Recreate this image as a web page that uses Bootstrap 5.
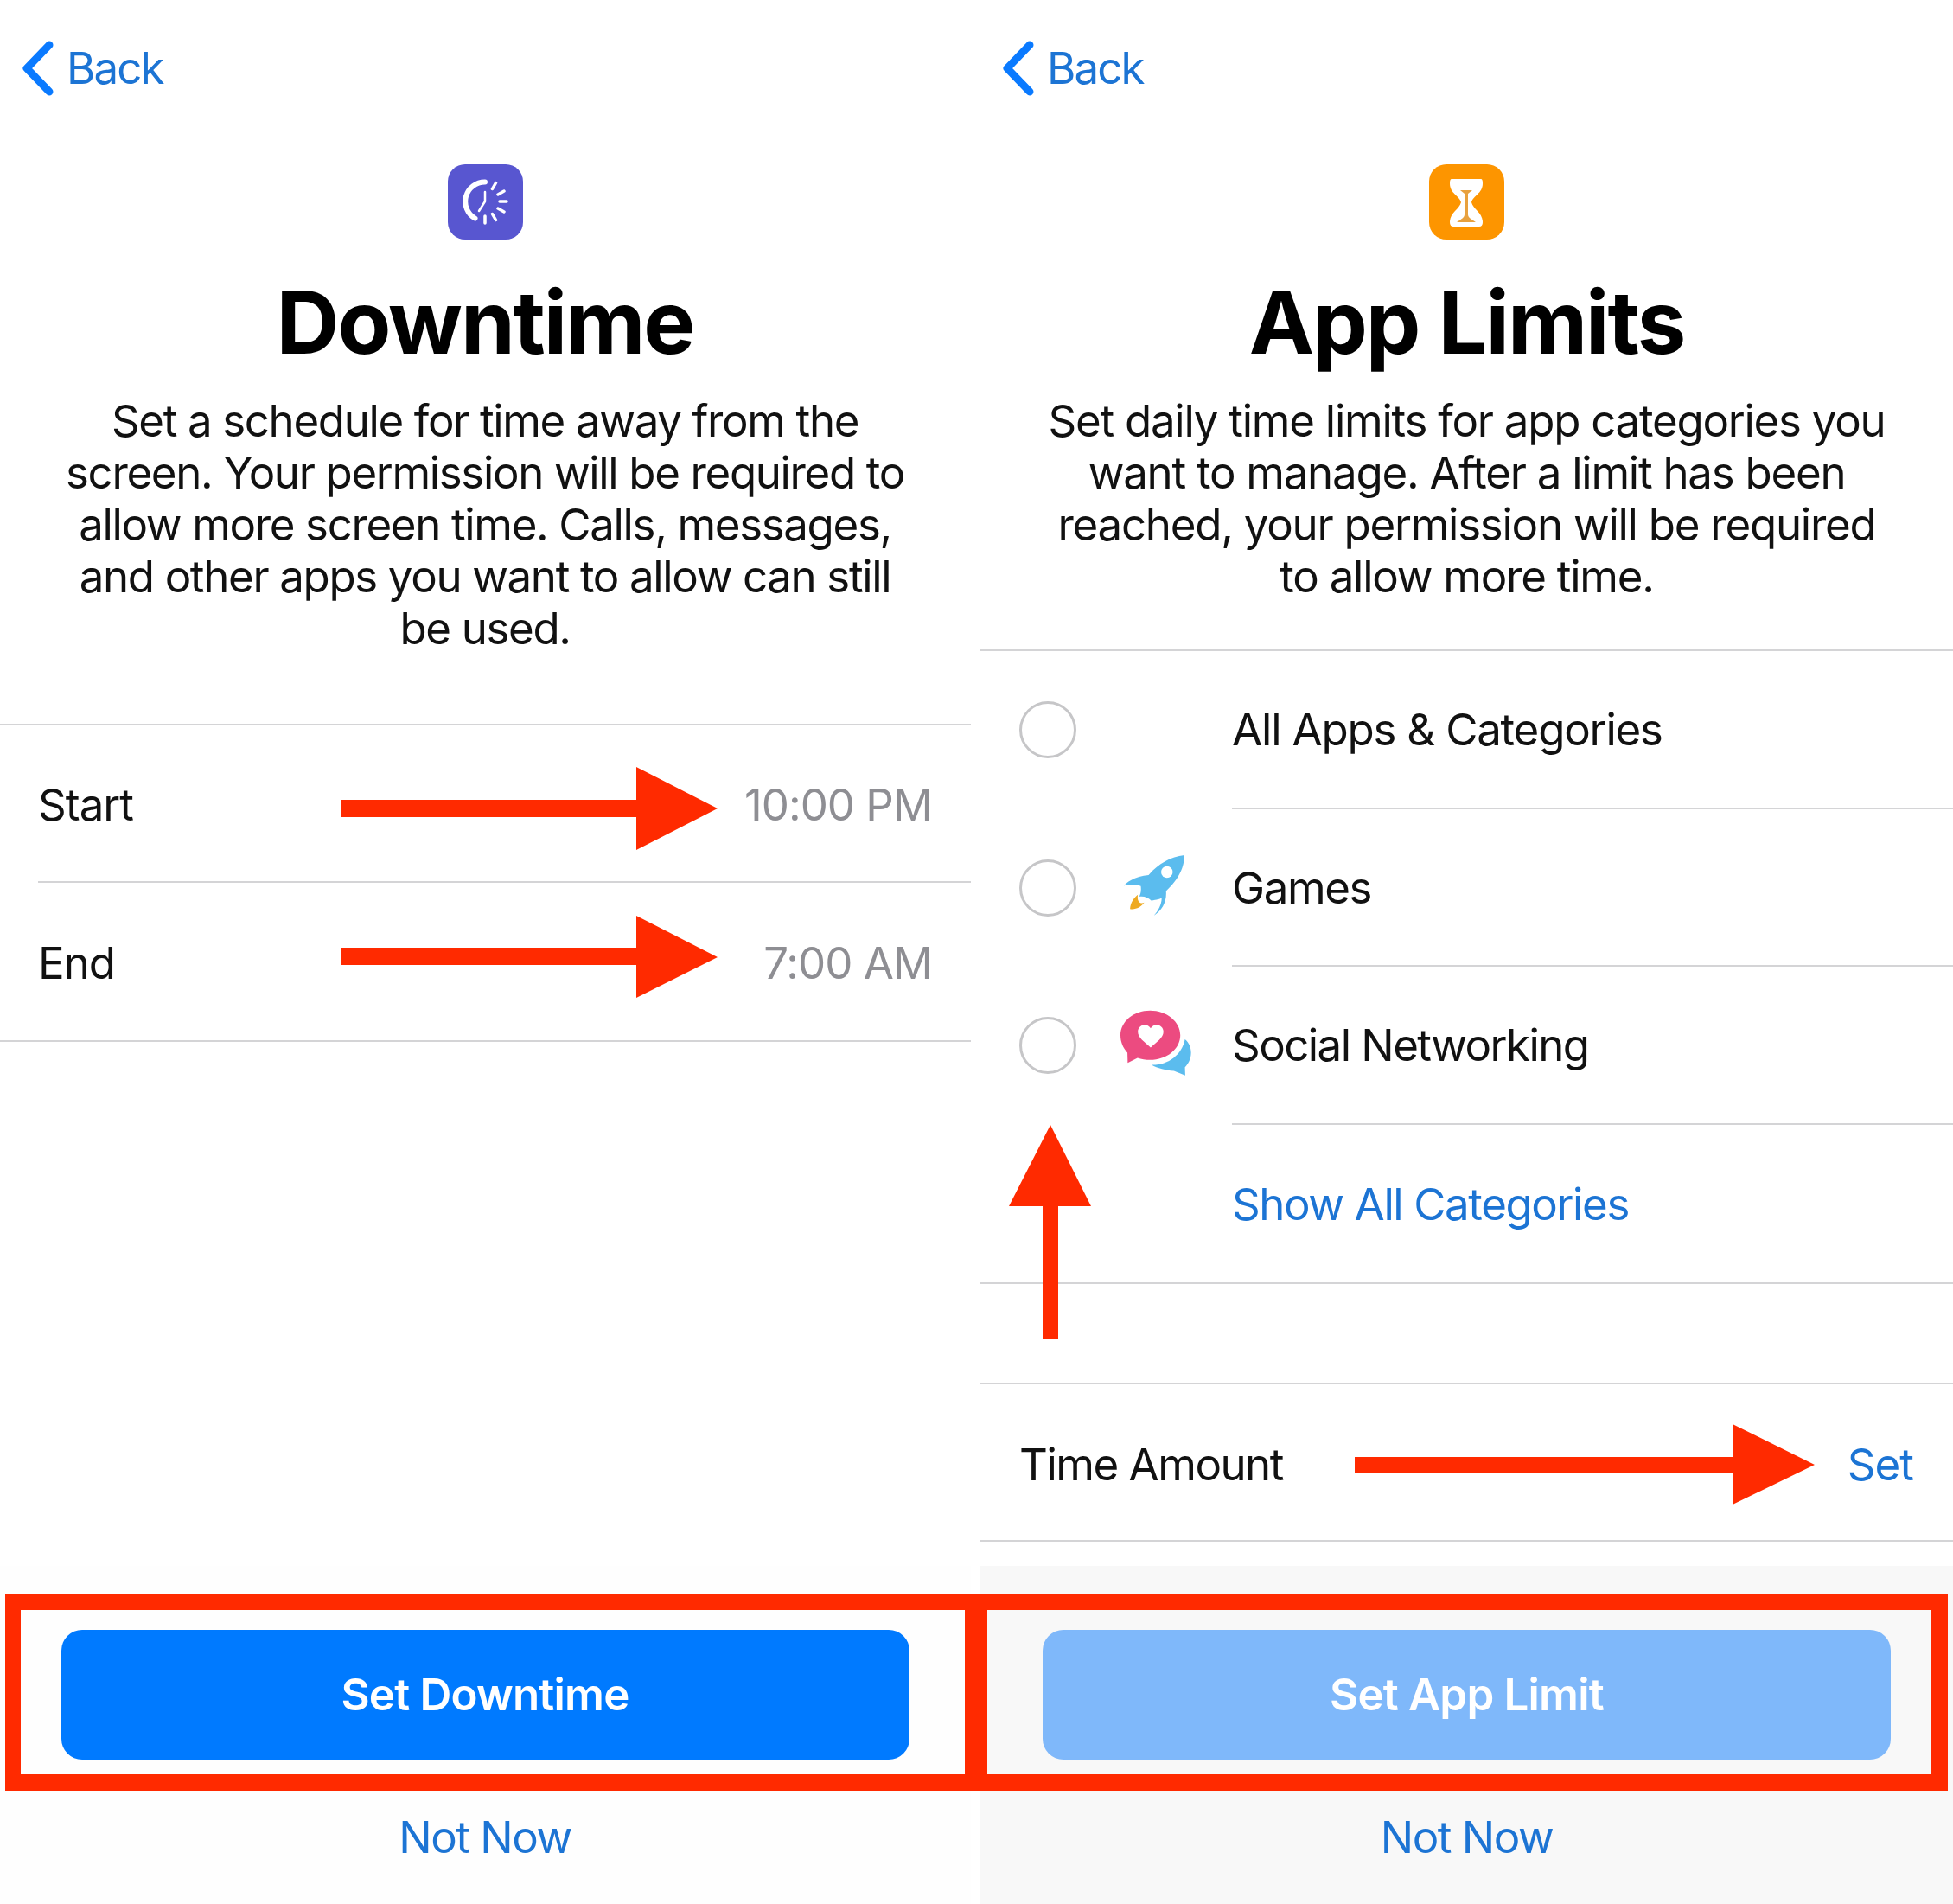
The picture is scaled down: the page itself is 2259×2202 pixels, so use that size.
<!DOCTYPE html>
<html lang="en">
<head>
<meta charset="UTF-8">
<title>Screen Time Setup</title>
<link href="https://cdn.jsdelivr.net/npm/bootstrap@5.3.3/dist/css/bootstrap.min.css" rel="stylesheet"/>
<style>
  html, body { margin: 0; background: #fff; }
  body { width: 2259px; height: 2202px; position: relative; overflow: hidden; font-family: Inter, "Liberation Sans", sans-serif; font-size: 51px; color: #111; }
  .screens { width: 2259px; height: 2202px; }
  .phone { width: 1124px; height: 2202px; margin-left: -1px; }
  .phone-right { width: 1125px; margin-left: 11px; }
  .back-bar { height: 158px; padding-left: 25px; color: #1c74d4; }
  .phone:first-child .back-bar { padding-left: 26px; }
  .back-bar span { margin-left: 14px; letter-spacing: -1.9px; }
  .app-tile { width: 87px; height: 87px; margin: 32px auto 0; display: block; }
  .screen-title { font-size: 101px; font-weight: 700; line-height: 120px; margin: 35px 0 0; letter-spacing: -2px; color: #000; font-family: Inter, sans-serif; }
  .intro { line-height: 60px; margin: 25px 0 0; letter-spacing: -1.35px; }
  .intro-long { margin-bottom: 80px; }
  .intro-short { margin-bottom: 54px; letter-spacing: -1.25px; }
  .sep-top { border-top: 2px solid #d4d4d6; }
  .sep-bottom { border-bottom: 2px solid #d4d4d6; }
  .line-row { height: 182px; padding-top: 4px; letter-spacing: -1px; }
  .time-row { height: 184px; padding-top: 6px; }
  .inset-a { padding-left: 45px; }
  .inset-end { padding-right: 46px; }
  .inset-end-l { padding-right: 45px; }
  .tight-label { letter-spacing: -1.5px; }
  .muted-val { color: #8e8e93; }
  .blue-link { color: #1c74d4; text-decoration: none; }
  .radio-ring { width: 66px; height: 66px; border: 3px solid #c6c6c8; border-radius: 50%; margin-left: 45px; flex: none; }
  .cat-icon { width: 90px; margin: 0 45px; flex: none; display: flex; justify-content: center; }
  .cat-text { flex: 1; height: 100%; display: flex; align-items: center; padding-top: 2px; letter-spacing: -1.4px; }
  .cat-text-wide { letter-spacing: -1.2px; }
  .cat-text-narrow { letter-spacing: -1.55px; }
  .cat-line { border-bottom: 2px solid #d4d4d6; }
  .cat-row { height: 182.6px; }
  .rocket-pic { margin: 0 0 10px 6px; }
  .bubble-pic { margin: 0 0 6px 4px; }
  .time-gap { height: 116px; }
  .bottom-zone { height: 391px; margin-top: auto; background: #fefefe; }
  .bottom-grey { background: #f8f8f8; }
  .big-btn { width: 981px; height: 150px; margin: 74px auto 0; display: block; border: 0; border-radius: 24px; background: #007aff; color: #fff; font-size: 51px; font-weight: 600; letter-spacing: -0.8px; }
  .big-btn-off { background: #7fb8fa; }
  .not-now { display: block; margin-top: 60px; line-height: 60px; letter-spacing: -1.5px; }
  .marks { position: absolute; left: 0; top: 0; pointer-events: none; }
</style>
</head>
<body>
<div class="screens d-flex">

  <div class="phone d-flex flex-column text-center">
    <div class="back-bar d-flex align-items-center text-start">
      <svg width="38" height="64" viewBox="0 0 38 64"><path d="M32 5 L6 32 L32 59" fill="none" stroke="#0a7aff" stroke-width="9" stroke-linecap="round" stroke-linejoin="round"/></svg>
      <span>Back</span>
    </div>
    <svg class="app-tile" viewBox="0 0 87 87">
      <rect width="87" height="87" rx="20" fill="#5856d0"/>
      <path d="M43 20.5 A22.5 22.5 0 0 0 31.5 62.5" fill="none" stroke="#fff" stroke-width="6" stroke-linecap="round"/>
      <path d="M43 32 V43 L36 54" fill="none" stroke="#fff" stroke-width="2.5" stroke-linecap="round" stroke-linejoin="round"/>
      <path d="M51.5 28.5 L55.5 21.5 M58 35 L65 31 M60 43 L68 43 M58 51 L65 55 M51.5 57.5 L55.5 64.5 M43 60 L43 68" stroke="#fff" stroke-width="3.5" stroke-linecap="round"/>
    </svg>
    <h1 class="screen-title">Downtime</h1>
    <p class="intro intro-long">Set a schedule for time away from the<br>screen. Your permission will be required to<br>allow more screen time. Calls, messages,<br>and other apps you want to allow can still<br>be used.</p>
    <div class="sep-top inset-a">
      <div class="line-row d-flex justify-content-between align-items-center inset-end-l sep-bottom"><span>Start</span><span class="muted-val">10:00 PM</span></div>
      <div class="line-row d-flex justify-content-between align-items-center inset-end-l"><span>End</span><span class="muted-val">7:00 AM</span></div>
    </div>
    <div class="sep-top"></div>
    <div class="bottom-zone">
      <button type="button" class="btn big-btn">Set Downtime</button>
      <a href="#" class="not-now blue-link">Not Now</a>
    </div>
  </div>

  <div class="phone phone-right d-flex flex-column text-center">
    <div class="back-bar d-flex align-items-center text-start">
      <svg width="38" height="64" viewBox="0 0 38 64"><path d="M32 5 L6 32 L32 59" fill="none" stroke="#0a7aff" stroke-width="9" stroke-linecap="round" stroke-linejoin="round"/></svg>
      <span>Back</span>
    </div>
    <svg class="app-tile" viewBox="0 0 87 87">
      <rect width="87" height="87" rx="20" fill="#fd9500"/>
      <path d="M26 17 H60 Q62 17 62 22 C62 34 51 36 49 44 C51 52 62 56 62 67 Q62 72 58 72 H28 Q24 72 24 67 C24 56 35 52 37 44 C35 36 24 34 24 22 Q24 17 26 17 Z" fill="#fff"/>
      <path d="M36 30 H50 L45 34 V58 C45 62 50 64 54 67 H32 C36 64 41 62 41 58 V34 Z" fill="#e8a13e"/>
    </svg>
    <h1 class="screen-title">App Limits</h1>
    <p class="intro intro-short">Set daily time limits for app categories you<br>want to manage. After a limit has been<br>reached, your permission will be required<br>to allow more time.</p>
    <div class="sep-top text-start">
      <div class="cat-row d-flex align-items-center">
        <div class="radio-ring"></div><div class="cat-icon"></div>
        <div class="cat-text cat-text-wide cat-line">All Apps &amp; Categories</div>
      </div>
      <div class="cat-row d-flex align-items-center">
        <div class="radio-ring"></div>
        <div class="cat-icon">
          <svg class="rocket-pic" width="84" height="74" viewBox="440 80 250 220">
            <path d="M660 92 C612 98 572 120 537 160 C503 163 472 175 452 197 C475 191 495 192 510 198 C512 215 510 225 504 235 C520 232 535 238 546 248 C565 245 578 242 582 238 C582 262 570 282 555 300 C585 282 600 250 597 215 C640 175 660 135 660 92 Z" fill="#5bbcee"/>
            <circle cx="600" cy="150" r="20" fill="#fff"/>
            <path d="M500 228 C485 240 475 255 473 277 C492 280 510 272 522 255 C510 262 495 252 500 228 Z" fill="#eeaa22"/>
          </svg>
        </div>
        <div class="cat-text cat-line">Games</div>
      </div>
      <div class="cat-row d-flex align-items-center">
        <div class="radio-ring"></div>
        <div class="cat-icon">
          <svg class="bubble-pic" width="84" height="78" viewBox="435 632 250 232">
            <path d="M540 637 C597 637 644 675 644 722 C644 770 597 807 540 807 C525 807 510 805 497 800 L463 817 L462 782 C447 766 438 745 438 722 C438 675 483 637 540 637 Z" fill="#ec4b80"/>
            <path d="M542 764 C520 745 498 730 498 710 C498 695 510 686 522 686 C531 686 538 691 542 698 C546 691 553 686 562 686 C574 686 586 695 586 710 C586 730 564 745 542 764 Z" fill="#fff"/>
            <path d="M660 736 C675 748 681 765 681 782 C681 805 670 822 660 832 L661 860 L622 845 C595 843 565 836 545 824 C600 826 650 790 660 736 Z" fill="#5bbcee"/>
          </svg>
        </div>
        <div class="cat-text cat-text-narrow cat-line">Social Networking</div>
      </div>
      <div class="cat-row d-flex align-items-center">
        <div class="radio-ring invisible"></div><div class="cat-icon"></div>
        <div class="cat-text"><a href="#" class="blue-link">Show All Categories</a></div>
      </div>
    </div>
    <div class="sep-top time-gap"></div>
    <div class="sep-top sep-bottom line-row time-row d-flex justify-content-between align-items-center inset-a inset-end"><span class="tight-label">Time Amount</span><a href="#" class="blue-link">Set</a></div>
    <div class="bottom-zone bottom-grey">
      <button type="button" class="btn big-btn big-btn-off">Set App Limit</button>
      <a href="#" class="not-now blue-link">Not Now</a>
    </div>
  </div>
</div>

<svg class="marks" width="2259" height="2202" viewBox="0 0 2259 2202">
  <g fill="#ff2a00">
    <path d="M395 925 H736 V887 L830 935 L736 983 V945 H395 Z"/>
    <path d="M395 1096 H736 V1059 L830 1107 L736 1154 V1116 H395 Z"/>
    <path d="M1567 1685 H2004 V1647 L2099 1694 L2004 1740 V1703 H1567 Z"/>
    <path d="M1206 1549 V1395 H1167 L1215 1301 L1262 1395 H1224 V1549 Z"/>
    <path fill-rule="evenodd" d="M6 1843 H1124 V2071 H6 Z M24 1862 V2052 H1116 V1862 Z"/>
    <path fill-rule="evenodd" d="M1124 1843 H2253 V2071 H1124 Z M1142 1862 V2052 H2233 V1862 Z"/>
  </g>
</svg>
</body>
</html>
